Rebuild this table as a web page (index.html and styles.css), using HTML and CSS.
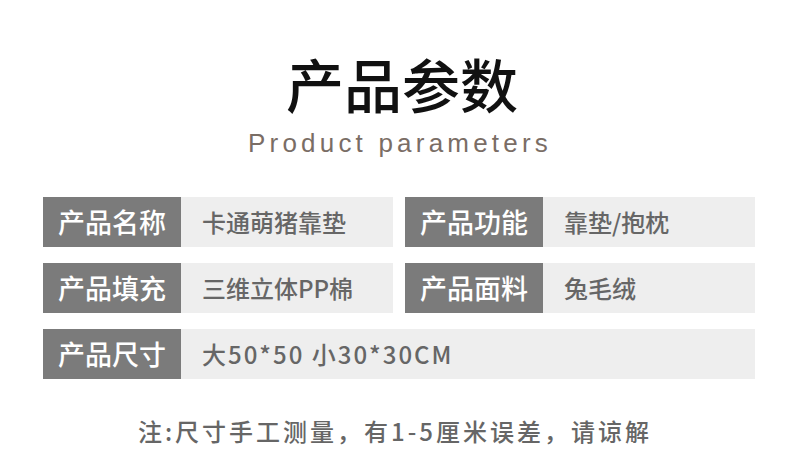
FILE: index.html
```html
<!DOCTYPE html>
<html lang="zh-CN">
<head>
  <meta charset="UTF-8">
  <meta name="viewport" content="width=device-width, initial-scale=1.0">
  <title>产品参数</title>
  <link rel="stylesheet" href="styles.css">
</head>
<body>
  <div class="page">
    <h1>产品参数</h1>
    <p class="subtitle">Product parameters</p>

    <div class="params">
      <div class="row">
        <div class="item">
          <span class="label">产品名称</span>
          <span class="value">卡通萌猪靠垫</span>
        </div>
        <div class="item">
          <span class="label">产品功能</span>
          <span class="value">靠垫/抱枕</span>
        </div>
      </div>
      <div class="row">
        <div class="item">
          <span class="label">产品填充</span>
          <span class="value">三维立体PP棉</span>
        </div>
        <div class="item">
          <span class="label">产品面料</span>
          <span class="value">兔毛绒</span>
        </div>
      </div>
      <div class="row">
        <div class="item">
          <span class="label">产品尺寸</span>
          <span class="value spaced">大50*50 小30*30CM</span>
        </div>
      </div>
    </div>

    <p class="note">注:尺寸手工测量，有1-5厘米误差，请谅解</p>
  </div>
</body>
</html>
```

FILE: styles.css
```css
body {
  margin: 0;
  background: #fff;
  font-family: "Noto Sans CJK SC", "Noto Sans", sans-serif;
}

.page {
  width: 790px;
  height: 460px;
  overflow: hidden;
}

h1 {
  margin: 0;
  padding-top: 43px;
  padding-left: 14px;
  text-align: center;
  font-size: 58px;
  line-height: 80px;
  font-weight: 500;
  color: #111;
}

.subtitle {
  margin: 0;
  padding-left: 10px;
  text-align: center;
  font-family: "Liberation Sans", sans-serif;
  font-size: 26px;
  line-height: 40px;
  letter-spacing: 4.2px;
  color: #7a6d65;
}

.params {
  width: 712px;
  margin: 34px 0 0 43px;
  display: flex;
  flex-direction: column;
  gap: 16px;
}

.row {
  display: flex;
  gap: 12px;
}

.item {
  flex: 1;
  display: flex;
  height: 50px;
  background: #eeeeee;
}

.label {
  width: 138px;
  background: #7b7b7b;
  color: #fff;
  font-size: 27px;
  font-weight: 500;
  line-height: 50px;
  text-align: center;
}

.value {
  padding-left: 21px;
  color: #666;
  font-size: 24px;
  font-weight: 500;
  line-height: 50px;
}

.spaced {
  letter-spacing: 2px;
}

.note {
  margin: 36px 0 0;
  text-align: center;
  font-size: 24px;
  font-weight: 500;
  letter-spacing: 3px;
  line-height: 32px;
  color: #666;
}
```
